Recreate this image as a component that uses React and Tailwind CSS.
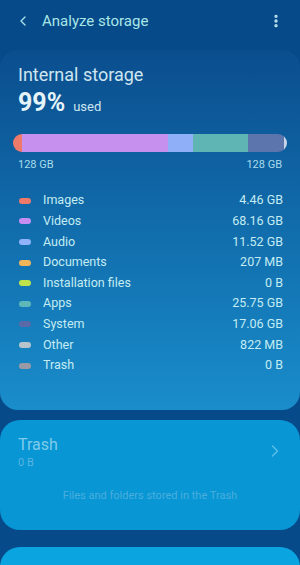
import { ChevronLeft, ChevronRight, EllipsisVertical } from "lucide-react";

const items = [
  { name: "Images", size: "4.46 GB", color: "bg-[#f07a6a]" },
  { name: "Videos", size: "68.16 GB", color: "bg-[#c58ef0]" },
  { name: "Audio", size: "11.52 GB", color: "bg-[#8fb2f8]" },
  { name: "Documents", size: "207 MB", color: "bg-[#f2b55a]" },
  { name: "Installation files", size: "0 B", color: "bg-[#bfe34a]" },
  { name: "Apps", size: "25.75 GB", color: "bg-[#5fb8b8]" },
  { name: "System", size: "17.06 GB", color: "bg-[#5a6aa8]" },
  { name: "Other", size: "822 MB", color: "bg-[#b8c4cc]" },
  { name: "Trash", size: "0 B", color: "bg-[#9a9aa6]" },
];

export default function App() {
  return (
    <div
      className="w-[300px] h-[565px] overflow-hidden bg-[#074a8a] text-[#bfe8f0]"
      style={{ fontFamily: "Roboto, 'Noto Sans', sans-serif" }}
    >
      {/* header */}
      <div className="h-[42px] flex items-center pl-[15px] pr-[16px]">
        <ChevronLeft size={16} strokeWidth={2} className="text-[#a8e2e8]" />
        <span className="ml-[11px] text-[15px] text-[#a8e6e6]">Analyze storage</span>
        <EllipsisVertical size={16} strokeWidth={3} className="ml-auto text-[#bfe8f0]" />
      </div>

      {/* storage card */}
      <div className="mt-[8px] h-[360px] rounded-[18px] bg-gradient-to-b from-[#0b4e8e] to-[#1a8dcb] px-[13px] pt-[13px]">
        <div className="pl-[5px] text-[18px] leading-[24px] text-[#cfe6f0]">Internal storage</div>
        <div className="pl-[5px] flex items-baseline mt-[1px]">
          <span className="text-[25px] font-bold leading-[30px] text-[#e4f4f8]">99%</span>
          <span className="ml-[8px] text-[13px] text-[#cfe6f0]">used</span>
        </div>

        <div className="mt-[16px] h-[18px] rounded-full overflow-hidden flex">
          <div className="w-[9px] bg-[#f07a6a]" />
          <div className="w-[146px] bg-[#c690ef]" />
          <div className="w-[25px] bg-[#8fb0f8]" />
          <div className="w-[55px] bg-[#5fb4b4]" />
          <div className="w-[36px] bg-[#5c75ad]" />
          <div className="flex-1 bg-[#c8d4e8]" />
        </div>

        <div className="mt-[5px] px-[5px] flex justify-between text-[11px] text-[#a8dcec]">
          <span>128 GB</span>
          <span>128 GB</span>
        </div>

        <div className="mt-[17px] flex flex-col">
          {items.map((it) => (
            <div key={it.name} className="h-[20.6px] flex items-center text-[12.5px]">
              <span className={`ml-[6px] w-[12px] h-[6px] rounded-full ${it.color}`} />
              <span className="ml-[12px] text-[#c4ecf2]">{it.name}</span>
              <span className="ml-auto mr-[4px] text-[#c4ecf2]">{it.size}</span>
            </div>
          ))}
        </div>
      </div>

      {/* trash card */}
      <div className="mt-[10px] h-[110px] rounded-[20px] bg-[#0896d5] px-[18px] pt-[15px]">
        <div className="flex items-start">
          <div>
            <div className="text-[16px] leading-[20px] text-[#7fcbeb]">Trash</div>
            <div className="text-[11px] leading-[16px] text-[#58b4e0]">0 B</div>
          </div>
          <ChevronRight size={20} strokeWidth={1.5} className="ml-auto mt-[6px] -mr-[3px] text-[#5fc0ea]" />
        </div>
        <div className="mt-[17px] text-center text-[11px] text-[#4aaedc]">
          Files and folders stored in the Trash
        </div>
      </div>

      <div className="mt-[17px] h-[60px] rounded-[20px] bg-[#0aa4e0]" />
    </div>
  );
}
